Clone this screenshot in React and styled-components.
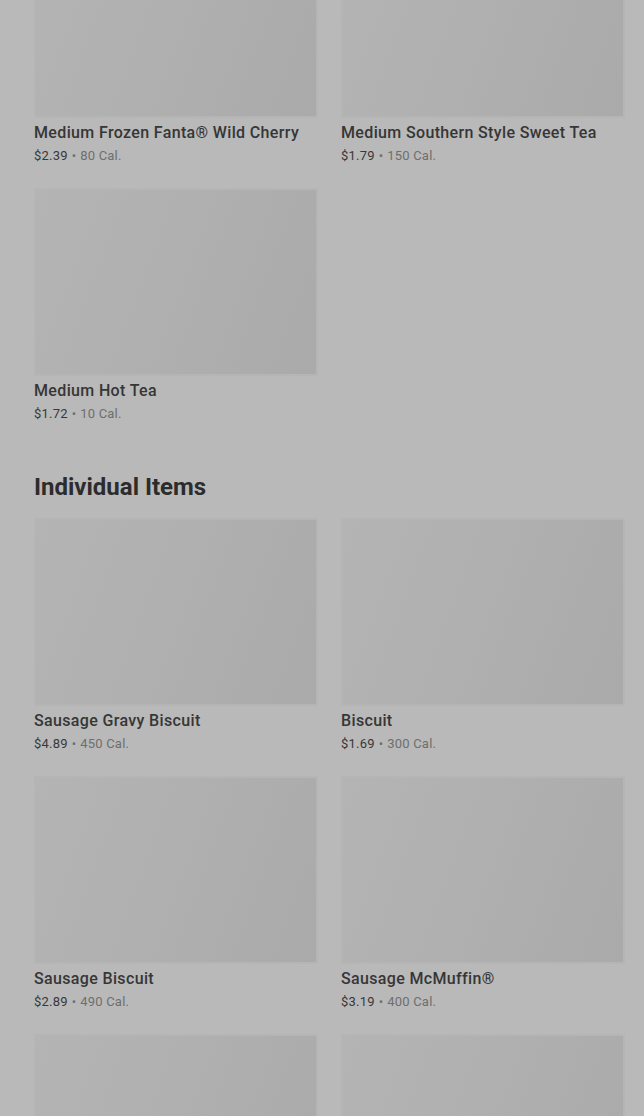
import React from "react";
import styled, { createGlobalStyle } from "styled-components";

const Global = createGlobalStyle`
  html, body { margin: 0; padding: 0; background: #b9b9b9; }
  body { font-family: Roboto, "Liberation Sans", Arial, sans-serif; overflow: hidden; }
`;

const Page = styled.main`
  padding: 0 20px 0 34px;
  margin-top: -70px;
  height: 1186px;
  overflow: hidden;
`;

const Section = styled.section`
  & + & { margin-top: 47px; }
`;

const Heading = styled.h2`
  margin: 0 0 15px;
  font-size: 24px;
  line-height: 32px;
  font-weight: 700;
  letter-spacing: 0;
  color: #2c2c2c;
`;

const Grid = styled.div`
  display: grid;
  grid-template-columns: 284px 284px;
  column-gap: 23px;
  row-gap: 22px;
`;

const Card = styled.article`
  display: flex;
  flex-direction: column;
`;

const Thumb = styled.div`
  height: 188px;
  box-sizing: border-box;
  border: 2px solid #b5b5b5;
  background: linear-gradient(110deg, #b4b4b4 0%, #b0b0b0 45%, #aaaaaa 100%);
`;

const Title = styled.div`
  margin-top: 5px;
  font-size: 16px;
  line-height: 20px;
  font-weight: 500;
  letter-spacing: 0.35px;
  color: #363636;
  white-space: nowrap;
`;

const Meta = styled.div`
  margin-top: 3px;
  font-size: 13px;
  line-height: 20px;
  letter-spacing: 0.2px;
  color: #6e6e6e;
`;

const Price = styled.span`
  color: #383838;
`;

const Dot = styled.span`
  margin: 0 4px;
`;

const drinks = [
  { name: "Medium Frozen Fanta® Wild Cherry", price: "$2.39", cal: "80 Cal." },
  { name: "Medium Southern Style Sweet Tea", price: "$1.79", cal: "150 Cal." },
  { name: "Medium Hot Tea", price: "$1.72", cal: "10 Cal." },
];

const items = [
  { name: "Sausage Gravy Biscuit", price: "$4.89", cal: "450 Cal." },
  { name: "Biscuit", price: "$1.69", cal: "300 Cal." },
  { name: "Sausage Biscuit", price: "$2.89", cal: "490 Cal." },
  { name: "Sausage McMuffin®", price: "$3.19", cal: "400 Cal." },
  { thumbOnly: true, key: "a" },
  { thumbOnly: true, key: "b" },
];

function Item({ item }) {
  return (
    <Card>
      <Thumb />
      {!item.thumbOnly && (
        <>
          <Title>{item.name}</Title>
          <Meta>
            <Price>{item.price}</Price>
            <Dot>•</Dot>
            {item.cal}
          </Meta>
        </>
      )}
    </Card>
  );
}

export default function App() {
  return (
    <>
      <Global />
      <Page>
        <Section>
          <Grid>
            {drinks.map((d) => (
              <Item key={d.name} item={d} />
            ))}
          </Grid>
        </Section>
        <Section>
          <Heading>Individual Items</Heading>
          <Grid>
            {items.map((d) => (
              <Item key={d.name || d.key} item={d} />
            ))}
          </Grid>
        </Section>
      </Page>
    </>
  );
}
